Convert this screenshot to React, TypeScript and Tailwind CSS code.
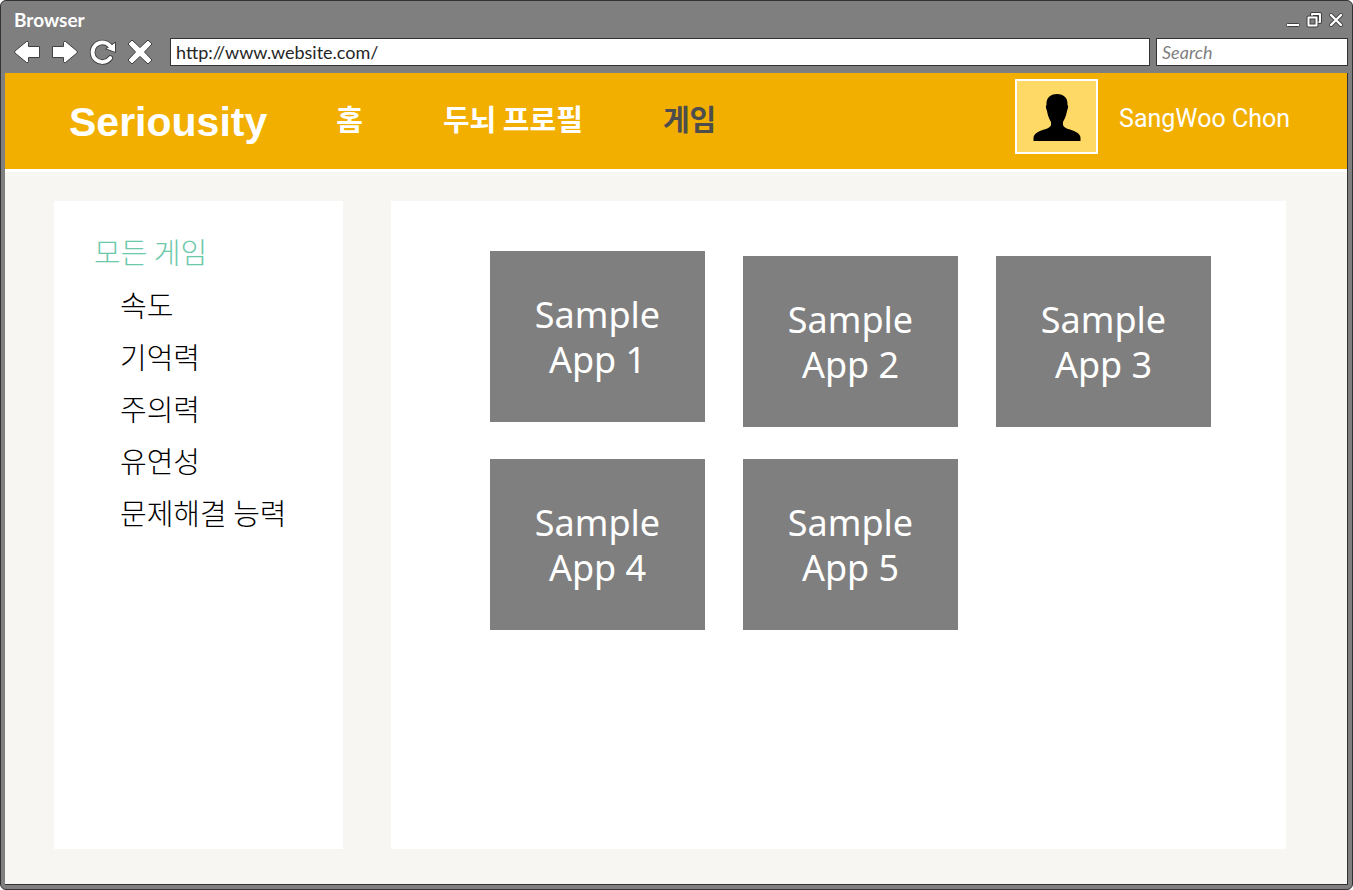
import React from "react";

const categories = ["속도", "기억력", "주의력", "유연성", "문제해결 능력"];
const apps = [
  { name: "Sample App 1", align: "self-start" },
  { name: "Sample App 2", align: "self-end" },
  { name: "Sample App 3", align: "self-end" },
  { name: "Sample App 4", align: "self-start" },
  { name: "Sample App 5", align: "self-start" },
];

const outline = { fill: "#fff", stroke: "#404040", strokeWidth: 1, strokeLinejoin: "round" as const };

function ArrowIcon({ flip = false }: { flip?: boolean }) {
  return (
    <svg width="28" height="24" viewBox="0 0 28 24" aria-hidden="true">
      <path
        d={
          flip
            ? "M1.5 6.5H12.5V2.5Q12.500 1 14.500 1.500L26 11Q27 12 26 13L14.500 22.500Q12.500 23 12.500 21.500V17.500H1.500Z"
            : "M26.500 6.500H15.500V2.500Q15.500 1 13.500 1.500L2 11Q1 12 2 13L13.500 22.500Q15.500 23 15.500 21.500V17.500H26.500Z"
        }
        {...outline}
      />
    </svg>
  );
}

function ReloadIcon() {
  return (
    <svg width="28" height="28" viewBox="0 0 28 28" aria-hidden="true">
      <g fill="none" strokeLinecap="round">
        <path d="M21.300 20A9.800 9.800 0 1 1 20.500 7.500" stroke="#404040" strokeWidth="5.600" />
        <path d="M26.500 4.500V14.500L17 11Z" {...outline} />
        <path d="M21.300 20A9.800 9.800 0 1 1 20.500 7.500" stroke="#fff" strokeWidth="3.800" />
        <path d="M20 7L23 9.500" stroke="#fff" strokeWidth="3.500" />
      </g>
    </svg>
  );
}

function StopIcon() {
  return (
    <svg width="26" height="26" viewBox="0 0 26 26" aria-hidden="true">
      <path
        d="M5 1L13 8.500L21 1L25 5L17.500 13L25 21L21 25L13 17.500L5 25L1 21L8.500 13L1 5Z"
        {...outline}
      />
    </svg>
  );
}

function MinimizeIcon() {
  return (
    <svg width="14" height="16" viewBox="0 0 14 16" aria-hidden="true">
      <rect x="0.500" y="11.500" width="13" height="3" rx="1" {...outline} />
    </svg>
  );
}

function RestoreIcon() {
  return (
    <svg width="16" height="16" viewBox="0 0 16 16" fill="none" aria-hidden="true">
      <path d="M6 2H14V10H6Z" stroke="#404040" strokeWidth="4" strokeLinejoin="round" />
      <path d="M6 2H14V10H6Z" stroke="#fff" strokeWidth="2" strokeLinejoin="round" />
      <path d="M2.500 5.500H10.500V13.500H2.500Z" fill="#7f7f7f" stroke="#404040" strokeWidth="4" strokeLinejoin="round" />
      <path d="M2.500 5.500H10.500V13.500H2.500Z" stroke="#fff" strokeWidth="2" strokeLinejoin="round" />
    </svg>
  );
}

function CloseIcon() {
  return (
    <svg width="16" height="16" viewBox="0 0 16 16" strokeLinecap="round" aria-hidden="true">
      <path d="M3 3L13 13M13 3L3 13" stroke="#404040" strokeWidth="4" />
      <path d="M3 3L13 13M13 3L3 13" stroke="#fff" strokeWidth="2.400" />
    </svg>
  );
}

function PersonIcon() {
  return (
    <svg width="48" height="48" viewBox="0 0 48 48" aria-hidden="true">
      <path
        d="M24 1C31 1 35 5 34.500 12C35.500 12.500 35.300 15 34 18C33 24 31 27 30 29V32C31 36 38 36 43 39Q47.500 41.500 47.500 45V48H0.500V45Q0.500 41.500 5 39C10 36 17 36 18 32V29C17 27 15 24 14 18C12.700 15 12.500 12.500 13.500 12C13 5 17 1 24 1Z"
        fill="#000"
      />
    </svg>
  );
}

function BrowserBar() {
  return (
    <div className="pb-[7px] font-['Lato','Liberation_Sans',sans-serif]">
      <div className="flex h-[37px] items-center justify-between pl-[9px] pr-1">
        <span className="text-[19px] font-bold leading-6 text-white">Browser</span>
        <div className="flex items-center gap-[6px]">
          <button type="button" aria-label="Minimize"><MinimizeIcon /></button>
          <button type="button" aria-label="Restore"><RestoreIcon /></button>
          <button type="button" aria-label="Close"><CloseIcon /></button>
        </div>
      </div>
      <div className="flex h-7 items-center">
        <div className="flex w-[165px] shrink-0 items-center gap-[10px] pl-2">
          <button type="button" aria-label="Back"><ArrowIcon /></button>
          <button type="button" aria-label="Forward"><ArrowIcon flip /></button>
          <button type="button" aria-label="Reload"><ReloadIcon /></button>
          <button type="button" aria-label="Stop"><StopIcon /></button>
        </div>
        <input
          aria-label="Address"
          defaultValue="http://www.website.com/"
          className="h-7 min-w-0 flex-1 border border-[#333] bg-white px-[5px] text-[18px] text-[#262626]"
        />
        <input
          aria-label="Search"
          placeholder="Search"
          className="ml-[6px] h-7 w-48 border border-[#333] bg-white px-[5px] text-[18px] italic text-[#262626] placeholder:text-[#7f7f7f]"
        />
      </div>
    </div>
  );
}

function SiteHeader() {
  return (
    <header className="flex h-[99px] items-center border-b-[3px] border-white bg-[#f2af00] pl-16 pr-[57px] text-white">
      <a href="#" className="pt-[2px] font-['Liberation_Sans',sans-serif] text-[41px] font-bold leading-[48px]">Seriousity</a>
      <nav className="ml-[69px] flex items-center gap-20 pb-1 text-[29px] font-bold">
        <a href="#">홈</a>
        <a href="#">두뇌 프로필</a>
        <a href="#" className="text-[#4d4d4d]">게임</a>
      </nav>
      <div className="ml-auto flex items-center gap-[21px] pb-[9px]">
        <div className="flex h-[75px] w-[83px] items-center justify-center border-2 border-white bg-[#ffd966]">
          <PersonIcon />
        </div>
        <span className="pt-1 font-['Roboto','Liberation_Sans',sans-serif] text-[25px] leading-8">SangWoo Chon</span>
      </div>
    </header>
  );
}

export default function App() {
  return (
    <div className="flex min-h-screen flex-col rounded-md border border-[#333] bg-[#7f7f7f] p-1 pt-0 font-['Noto_Sans_CJK_KR',sans-serif]">
      <BrowserBar />
      <div className="flex flex-1 flex-col border-b border-r border-[#333] bg-[#f7f6f2]">
        <SiteHeader />
        <div className="flex flex-1 gap-12 pb-[35px] pl-[49px] pr-[61px] pt-[29px]">
          <aside className="w-[289px] shrink-0 bg-white pl-10 pt-6 text-[29px] font-light leading-[52px] text-black">
            <a href="#" className="block text-[#6cc9aa]">모든 게임</a>
            <ul className="pl-[26px] pt-px">
              {categories.map((name) => (
                <li key={name}><a href="#">{name}</a></li>
              ))}
            </ul>
          </aside>
          <main className="min-w-0 flex-1 bg-white pl-[99px] pr-[74px] pt-[50px]">
            <div className="grid auto-rows-[176px] grid-cols-[repeat(auto-fill,215px)] gap-x-[38px] gap-y-8">
              {apps.map((app) => (
                <a
                  key={app.name}
                  href="#"
                  className={`${app.align} flex h-[171px] items-center justify-center bg-[#7f7f7f] px-10 text-center font-['Noto_Sans','Open_Sans',sans-serif] text-[36px] leading-[45px] text-white`}
                >
                  {app.name}
                </a>
              ))}
            </div>
          </main>
        </div>
      </div>
    </div>
  );
}
